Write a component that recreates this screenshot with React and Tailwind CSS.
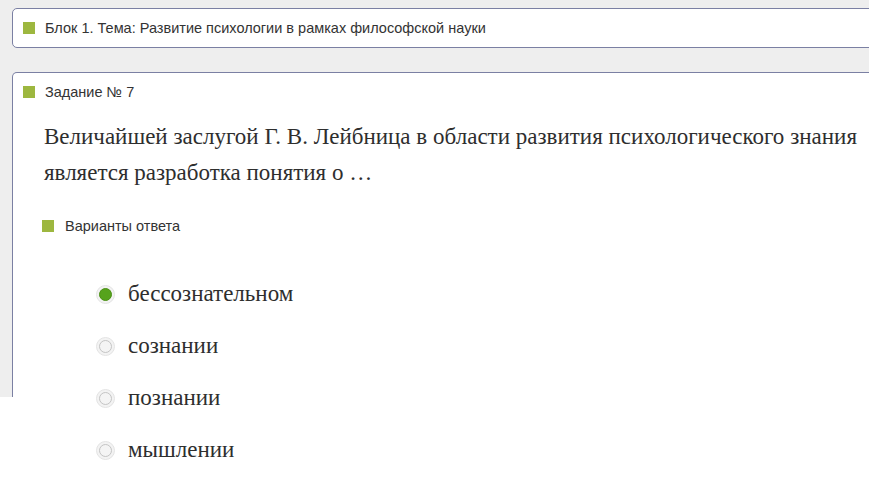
import React, { useState } from "react";

const answers = ["бессознательном", "сознании", "познании", "мышлении"];

const serif = { fontFamily: "'Liberation Serif', 'Times New Roman', serif" };

const Marker = ({ className = "" }) => (
  <span className={`inline-block w-3 h-3 bg-[#9db73f] shrink-0 ${className}`} />
);

const Radio = ({ checked }) => (
  <span className="w-[19px] h-[19px] rounded-full bg-[#f3f3f3] border border-[#e4e4e4] flex items-center justify-center shrink-0">
    {checked ? (
      <span className="w-[13px] h-[13px] rounded-full bg-[#56a31c] border border-[#4a9014]" />
    ) : (
      <span className="w-[13px] h-[13px] rounded-full bg-[#f4f4f4] border border-[#c4c4c4]" />
    )}
  </span>
);

export default function App() {
  const [selected, setSelected] = useState(0);

  return (
    <div className="w-[869px] h-[498px] overflow-hidden bg-white" style={{ fontFamily: "'Liberation Sans', Arial, sans-serif" }}>
      <div className="h-[397px] bg-[#eeeeee] pt-2 pl-3">
        {/* block header */}
        <div className="w-[900px] h-10 bg-white border border-[#7b80a3] rounded-[5px] flex items-center gap-[10px] pl-[10px]">
          <Marker />
          <span className="text-[14.5px] leading-5 text-[#333]">Блок 1. Тема: Развитие психологии в рамках философской науки</span>
        </div>

        {/* task card */}
        <div className="mt-6 w-[900px] h-[325px] bg-white border border-b-0 border-[#7b80a3] rounded-t-[5px] pt-[9px]">
          <div className="flex items-center gap-[10px] pl-[10px] h-5">
            <Marker />
            <span className="text-[14.5px] leading-5 text-[#333]">Задание № 7</span>
          </div>

          <p className="mt-[17px] ml-[31px] w-[813px] text-justify text-[23px] leading-[36px] text-[#2e2e2e]" style={serif}>
            Величайшей заслугой Г. В. Лейбница в области развития психологического знания является разработка понятия о …
          </p>

          <div className="mt-[25px] flex items-center gap-[11px] pl-[29px] h-5">
            <Marker />
            <span className="text-[14.5px] leading-5 text-[#333]">Варианты ответа</span>
          </div>

          <ul className="mt-[45px] pl-[83px] flex flex-col gap-[26px]">
            {answers.map((a, i) => (
              <li
                key={a}
                className="flex items-center gap-[13px] h-[26px] cursor-pointer"
                onClick={() => setSelected(i)}
              >
                <Radio checked={selected === i} />
                <span className="text-[23px] text-[#2e2e2e]" style={serif}>
                  {a}
                </span>
              </li>
            ))}
          </ul>
        </div>
      </div>
    </div>
  );
}
